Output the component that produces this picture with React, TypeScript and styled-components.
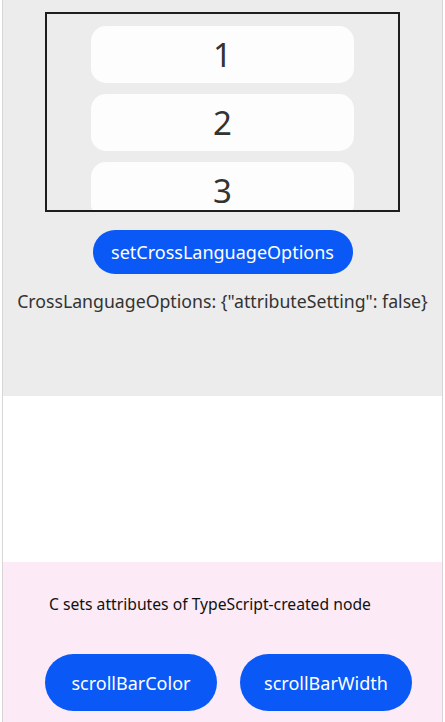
import React from "react";
import styled, { createGlobalStyle } from "styled-components";

const GlobalStyle = createGlobalStyle`
  html, body {
    margin: 0;
    padding: 0;
    background: #ffffff;
  }
  body {
    font-family: "Noto Sans", "Roboto", sans-serif;
  }
  * {
    box-sizing: border-box;
  }
`;

const items = ["1", "2", "3"];

const App = () => {
  return (
    <>
      <GlobalStyle />
      <Page>
        <TopSection>
          <ScrollFrame>
            {items.map((item) => (
              <ListItem key={item}>{item}</ListItem>
            ))}
          </ScrollFrame>
          <TopButton width={260} height={44}>
            setCrossLanguageOptions
          </TopButton>
          <InfoText>CrossLanguageOptions: {'{"attributeSetting": false}'}</InfoText>
        </TopSection>
        <MiddleSection />
        <BottomSection>
          <Caption>C sets attributes of TypeScript-created node</Caption>
          <ButtonRow>
            <PillButton width={172} height={57}>
              scrollBarColor
            </PillButton>
            <PillButton width={172} height={57}>
              scrollBarWidth
            </PillButton>
          </ButtonRow>
        </BottomSection>
      </Page>
    </>
  );
};

export default App;

const Page = styled.div`
  width: 441px;
  height: 722px;
  margin: 0 2px;
  display: flex;
  flex-direction: column;
  border-left: 1px solid #d6d6d6;
  border-right: 1px solid #d6d6d6;
  overflow: hidden;
`;

const TopSection = styled.div`
  height: 396px;
  background: #ececec;
  display: flex;
  flex-direction: column;
  align-items: center;
  padding-top: 12px;
`;

const ScrollFrame = styled.div`
  width: 355px;
  height: 200px;
  border: 2px solid #1e1e1e;
  overflow: hidden;
  padding-top: 12px;
  display: flex;
  flex-direction: column;
  align-items: center;
  gap: 11px;
  flex-shrink: 0;
`;

const ListItem = styled.div`
  width: 263px;
  height: 57px;
  flex-shrink: 0;
  background: #fdfdfd;
  border-radius: 15px;
  display: flex;
  align-items: center;
  justify-content: center;
  font-size: 33px;
  line-height: 40px;
  color: #333333;
`;

const PillButton = styled.button<{ width: number; height: number }>`
  width: ${(props) => props.width}px;
  height: ${(props) => props.height}px;
  border: none;
  border-radius: ${(props) => props.height / 2}px;
  background: #0a59f7;
  color: #ffffff;
  font-family: "Noto Sans", "Roboto", sans-serif;
  font-size: 18px;
  padding: 0;
  flex-shrink: 0;
`;

const TopButton = styled(PillButton)`
  margin-top: 18px;
`;

const InfoText = styled.div`
  margin-top: 15px;
  font-size: 17.7px;
  line-height: 24px;
  color: #333333;
  white-space: nowrap;
`;

const MiddleSection = styled.div`
  height: 166px;
  background: #ffffff;
`;

const BottomSection = styled.div`
  flex: 1;
  background: #fcebf6;
  display: flex;
  flex-direction: column;
  padding: 30px 0 0 46px;
`;

const Caption = styled.div`
  font-size: 15.7px;
  line-height: 24px;
  color: #111111;
`;

const ButtonRow = styled.div`
  margin-top: 38px;
  margin-left: -4px;
  display: flex;
  gap: 23px;
`;
